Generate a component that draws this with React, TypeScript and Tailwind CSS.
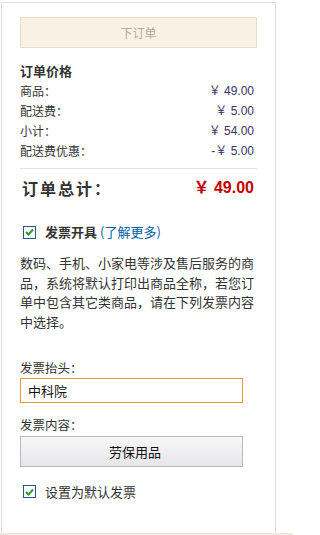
function Check() {
  return (
    <span className="ml-[3px] flex h-[13px] w-[13px] shrink-0 items-center justify-center border border-[#2a5585] bg-white">
      <svg width="9" height="8" viewBox="0 0 9 8">
        <path d="M1 4 L3.5 6.5 L8 1.5" fill="none" stroke="#2c9a2c" strokeWidth="2" />
      </svg>
    </span>
  );
}

const rows = [
  ["商品：", "￥ 49.00"],
  ["配送费：", "￥ 5.00"],
  ["小计：", "￥ 54.00"],
  ["配送费优惠：", "-￥ 5.00"],
];

export default function App() {
  return (
    <div className="w-[293px] h-[535px] bg-white flex flex-col text-[#333] font-['Noto_Sans_CJK_SC',sans-serif]">
      <div className="ml-[1px] mt-[2px] w-[275px] flex-1 border border-b-0 border-[#dddddd] px-[18px] pt-[14px]">
        <div className="h-[31px] flex items-center justify-center bg-[#f8f1e4] border border-[#e8dcc6] text-[12px] text-[#b5ab9a]">
          下订单
        </div>

        <div className="mt-[13px] h-[20px] leading-[20px] text-[13px] font-bold">订单价格</div>
        {rows.map(([k, v]) => (
          <div key={k} className="flex justify-between h-[20px] leading-[20px] text-[12px]">
            <span>{k}</span>
            <span className="pr-[3px] text-[#3b3566] font-['Liberation_Sans','Noto_Sans_CJK_SC',sans-serif]">{v}</span>
          </div>
        ))}

        <div className="mt-[7px] border-t border-[#e3e3e3]" />

        <div className="mt-[7px] flex justify-between h-[24px] leading-[24px] text-[16px] font-bold">
          <span className="pl-[2px] tracking-[2px]">订单总计：</span>
          <span className="pr-[3px] text-[#c40000] font-['Liberation_Sans','Noto_Sans_CJK_SC',sans-serif]">￥ 49.00</span>
        </div>

        <div className="mt-[22px] flex items-center h-[20px] text-[13px]">
          <Check />
          <span className="ml-[9px] font-bold">发票开具</span>
          <a className="ml-[3px] text-[#005ea7]">(了解更多)</a>
        </div>

        <p className="mt-[11px] text-[13px] leading-[19.7px]">
          数码、手机、小家电等涉及售后服务的商品，系统将默认打印出商品全称，若您订单中包含其它类商品，请在下列发票内容中选择。
        </p>

        <div className="mt-[27px] h-[18px] leading-[18px] text-[12.5px]">发票抬头：</div>
        <div className="mt-[1px] w-[223px] h-[25px] flex items-center border border-[#e8983f] pl-[7px] text-[13px] text-[#111]">
          中科院
        </div>

        <div className="mt-[13px] h-[18px] leading-[18px] text-[12.5px]">发票内容：</div>
        <div className="mt-[2px] w-[223px] h-[31px] flex items-center justify-center border border-[#b9b9bd] bg-gradient-to-b from-[#f8f8f9] to-[#e6e6ea] text-[13px] text-[#111]">
          <span className="pl-[7px]">劳保用品</span>
        </div>

        <div className="mt-[15px] flex items-center h-[20px] text-[13px]">
          <Check />
          <span className="ml-[9px]">设置为默认发票</span>
        </div>
      </div>
      <div className="h-[2px] bg-[#ecebe0]" />
    </div>
  );
}
